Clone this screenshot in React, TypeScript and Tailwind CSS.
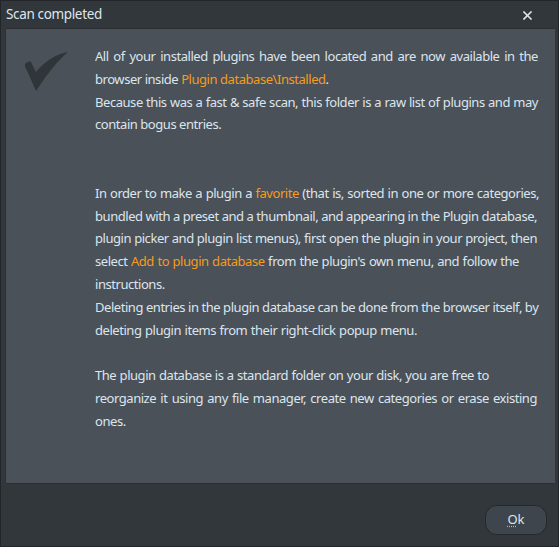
import React from 'react'

const Hi = ({ children }: { children: React.ReactNode }) => (
  <span className="text-[#f59c1a]">{children}</span>
)

// each line keeps the width it has in the dialog, words spread to fill it
const lines: { text: React.ReactNode; w?: string }[] = [
  { text: 'All of your installed plugins have been located and are now available in the', w: 'w-[443px]' },
  { text: <>browser inside <Hi>Plugin database\Installed</Hi>.</>, w: 'w-[232px]' },
  { text: 'Because this was a fast & safe scan, this folder is a raw list of plugins and may', w: 'w-[443px]' },
  { text: 'contain bogus entries.' },
  { text: '' },
  { text: '' },
  { text: <>In order to make a plugin a <Hi>favorite</Hi> (that is, sorted in one or more categories,</>, w: 'w-[444px]' },
  { text: 'bundled with a preset and a thumbnail, and appearing in the Plugin database,', w: 'w-[426px]' },
  { text: 'plugin picker and plugin list menus), first open the plugin in your project, then', w: 'w-[442px]' },
  { text: <>select <Hi>Add to plugin database</Hi> from the plugin's own menu, and follow the</>, w: 'w-[424px]' },
  { text: 'instructions.' },
  { text: 'Deleting entries in the plugin database can be done from the browser itself, by', w: 'w-[442px]' },
  { text: 'deleting plugin items from their right-click popup menu.', w: 'w-[322px]' },
  { text: '' },
  { text: 'The plugin database is a standard folder on your disk, you are free to', w: 'w-[394px]' },
  { text: 'reorganize it using any file manager, create new categories or erase existing', w: 'w-[442px]' },
  { text: 'ones.' },
]

export default function App() {
  return (
    <div
      className="w-[559px] h-[547px] bg-[#32373c] border border-[#22262a] flex flex-col"
      style={{ fontFamily: '"Noto Sans", "Open Sans", sans-serif' }}
    >
      {/* Title bar */}
      <div className="h-[27px] flex items-center justify-between pl-[5px] pr-[26px] shrink-0">
        <span className="text-[13.5px] tracking-[-0.35px] text-[#dfe6ec] leading-none">Scan completed</span>
        <svg width="9" height="9" viewBox="0 0 9 9" className="mt-[1px]">
          <path d="M1 1 L8 8 M8 1 L1 8" stroke="#dbe3ea" strokeWidth="1.6" strokeLinecap="square" />
        </svg>
      </div>

      {/* Content panel */}
      <div className="ml-[4px] mr-[3px] h-[456px] bg-[#4a5158] border-t border-l border-b border-[#2c3034] flex shrink-0">
        <div className="w-[89px] shrink-0 pt-[23px] pl-[18px]">
          <svg width="48" height="42" viewBox="0 0 48 42">
            <path
              d="M1 12 C3 10 5 9 7 10 L12 20 C20 10 32 2 44 0 C32 10 22 24 12 39 C8 30 4 20 1 15 Z"
              fill="#30353a"
            />
          </svg>
        </div>
        <div className="pt-[16px] text-[13px] tracking-[-0.45px] leading-[22.8px] text-[#dce5ee] whitespace-nowrap">
          {lines.map((l, i) => (
            <div key={i} className={`h-[22.8px] ${l.w ? `${l.w} [text-align-last:justify]` : ''}`}>
              {l.text}
            </div>
          ))}
        </div>
      </div>

      {/* Footer */}
      <div className="flex-1 flex items-center justify-end pr-[11px]">
        <button className="w-[62px] h-[30px] rounded-[12px] bg-[#3e454c] border border-[#262a2e] text-[13px] text-[#dce5ee] mt-[9px]">
          <span className="underline decoration-dotted underline-offset-2 decoration-[#8fb6e0]">O</span>k
        </button>
      </div>
    </div>
  )
}
